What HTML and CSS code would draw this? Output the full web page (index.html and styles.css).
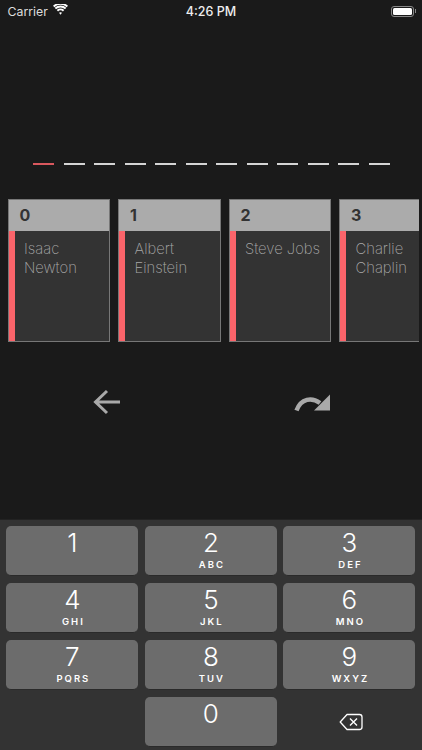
FILE: index.html
```html
<!DOCTYPE html>
<html lang="en">
<head>
<meta charset="utf-8">
<title>Memory pegs</title>
<link rel="stylesheet" href="styles.css">
</head>
<body>
<div class="app">
  <header class="status">
    <div class="status-left">
      <span>Carrier</span>
      <svg class="wifi" viewBox="0 0 16 12" width="15" height="11.500"><path d="M8 8.600a2 2 0 0 1 1.600.7L8 11.400 6.400 9.300A2 2 0 0 1 8 8.600Z" fill="#fff"/><path d="M4.700 7.100a4.800 4.800 0 0 1 6.600 0M2.500 4.700a8 8 0 0 1 11 0M.7 2.500a10.800 10.800 0 0 1 14.600 0" fill="none" stroke="#fff" stroke-width="2"/></svg>
    </div>
    <div class="status-time">4:26 PM</div>
    <div class="status-right">
      <span class="battery"><span class="battery-fill"></span></span><span class="battery-tip"></span>
    </div>
  </header>

  <div class="dashes">
    <i class="dash active"></i><i class="dash"></i><i class="dash"></i><i class="dash"></i><i class="dash"></i><i class="dash"></i><i class="dash"></i><i class="dash"></i><i class="dash"></i><i class="dash"></i><i class="dash"></i><i class="dash"></i>
  </div>

  <div class="cards">
    <article class="card"><h2>0</h2><div class="card-body"><p>Isaac Newton</p></div></article>
    <article class="card"><h2>1</h2><div class="card-body"><p>Albert Einstein</p></div></article>
    <article class="card"><h2>2</h2><div class="card-body"><p>Steve Jobs</p></div></article>
    <article class="card"><h2>3</h2><div class="card-body"><p>Charlie Chaplin</p></div></article>
  </div>

  <div class="actions">
    <svg class="icon-back" viewBox="0 0 28 26" width="28" height="26"><path d="M27 13H3M14 2 2.500 13 14 24" fill="none" stroke="#a9a9a9" stroke-width="3"/></svg>
    <svg class="icon-redo" viewBox="0 0 36 18" width="36" height="18"><path d="M2.500 16.500C7 4 18 3 26 9" fill="none" stroke="#a9a9a9" stroke-width="4.500"/><path d="M36 .5V16.500H20Z" fill="#a9a9a9"/></svg>
  </div>

  <div class="keyboard">
    <button class="key"><b>1</b></button>
    <button class="key"><b>2</b><small>ABC</small></button>
    <button class="key"><b>3</b><small>DEF</small></button>
    <button class="key"><b>4</b><small>GHI</small></button>
    <button class="key"><b>5</b><small>JKL</small></button>
    <button class="key"><b>6</b><small>MNO</small></button>
    <button class="key"><b>7</b><small>PQRS</small></button>
    <button class="key"><b>8</b><small>TUV</small></button>
    <button class="key"><b>9</b><small>WXYZ</small></button>
    <span class="key-empty"></span>
    <button class="key"><b>0</b></button>
    <button class="key key-plain"><svg viewBox="0 0 24 18" width="24" height="18"><path d="M8 1.500H20.500A2.500 2.500 0 0 1 23 4V14A2.500 2.500 0 0 1 20.500 16.500H8L1.200 9Z" fill="none" stroke="#fff" stroke-width="1.300" stroke-linejoin="round"/><path d="M11 5.500 18 12.500M18 5.500 11 12.500" fill="none" stroke="#fff" stroke-width="1.400"/></svg></button>
  </div>
</div>
</body>
</html>
```
FILE: styles.css
```css
* { box-sizing: border-box; }
html, body { margin: 0; padding: 0; }
body { background: #1a1a1a; font-family: Inter, "Liberation Sans", sans-serif; }
.app { width: 422px; height: 750px; display: flex; flex-direction: column; overflow: hidden; background: #1a1a1a; }

.status { height: 22px; padding: 0 6px 0 7.500px; display: flex; align-items: center; justify-content: space-between; color: #fff; font-size: 12.500px; position: relative; flex: none; }
.status-left { display: flex; align-items: center; gap: 5px; color: #ddd; font-size: 12.300px; }
.wifi { margin-top: -3px; }
.status-time { position: absolute; left: 0; right: 0; text-align: center; font-weight: 500; color: #eee; }
.status-right { display: flex; align-items: center; }
.battery { width: 23px; height: 11px; border: 1px solid #888; border-radius: 3px; padding: 1px; display: block; }
.battery-fill { display: block; height: 100%; background: #fff; border-radius: 1.500px; }
.battery-tip { width: 1px; height: 4px; background: #888; margin-left: 1px; }

.dashes { margin: 141px 0 0 33px; display: flex; gap: 9.500px; flex: none; height: 2px; }
.dash { width: 21px; height: 2px; background: #d4d4d4; display: block; }
.dash.active { background: #d9585e; }

.cards { margin: 34px 3px 0 7.500px; display: flex; gap: 8px; overflow: hidden; flex: none; height: 143px; }
.card { flex: 0 0 102.500px; height: 143px; border: 1px solid #777; background: #333; display: flex; flex-direction: column; }
.card h2 { margin: 0; height: 31px; flex: none; background: #ababab; color: #333; font-size: 16px; font-weight: 700; line-height: 31px; padding-left: 11px; }
.card-body { flex: 1; border-left: 6px solid #fb646a; padding: 9px 8px 0 9.500px; }
.card-body p { margin: 0; color: #a8a8a8; font-size: 14.800px; font-weight: 200; line-height: 18.500px; }

.actions { height: 177px; padding: 47px 0 0 92.500px; display: flex; align-items: flex-start; flex: none; }
.icon-redo { margin: 5px 0 0 173px; }

.keyboard { flex: 1; background: #333; border-top: 1px solid #222; padding: 6px 6.400px 0; display: grid; grid-template-columns: repeat(3, 132px); grid-auto-rows: 50px; column-gap: 6.500px; row-gap: 7px; }
.key { background: #6c6c6c; border: 0; border-bottom: 1px solid #2a2a2a; border-radius: 5px; padding: 0; color: #fff; display: flex; flex-direction: column; align-items: center; font-family: inherit; }
.key b { font-weight: 300; font-size: 26px; line-height: 30px; margin-top: 2px; }
.key small { font-size: 9.500px; font-weight: 600; letter-spacing: 2px; line-height: 11px; margin-top: 1px; padding-left: 2px; }
.key-plain { background: none; border: 0; justify-content: center; padding-left: 3px; }
```
